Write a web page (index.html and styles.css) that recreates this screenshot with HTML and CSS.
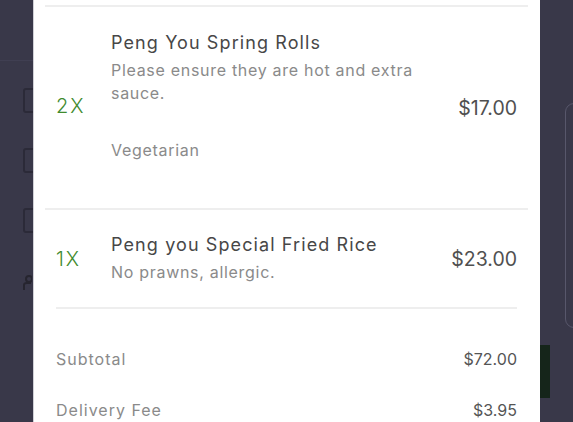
FILE: index.html
```html
<!DOCTYPE html>
<html lang="en">
<head>
    <meta charset="UTF-8">
    <meta name="viewport" content="width=device-width, initial-scale=1.0">
    <title>Order</title>
    <link rel="stylesheet" href="styles.css">
</head>
<body>
    <div class="screen">
        <div class="side side-left">
            <div class="rule"></div>
            <div class="field"></div>
            <div class="field"></div>
            <div class="field"></div>
            <svg class="person" width="10" height="16" viewBox="0 0 10 16">
                <circle cx="7" cy="4" r="3" fill="none" stroke="#26252f" stroke-width="2"/>
                <path d="M2 15 L2 10 Q2 8 5 8 L9 8" fill="none" stroke="#26252f" stroke-width="2"/>
            </svg>
        </div>

        <div class="modal">
            <div class="divider"></div>

            <div class="item item-first">
                <div class="qty">2X</div>
                <div class="info">
                    <div class="title">Peng You Spring Rolls</div>
                    <div class="note">Please ensure they are hot and extra sauce.</div>
                    <div class="note option">Vegetarian</div>
                </div>
                <div class="price">$17.00</div>
            </div>

            <div class="divider"></div>

            <div class="item item-second">
                <div class="qty">1X</div>
                <div class="info">
                    <div class="title">Peng you Special Fried Rice</div>
                    <div class="note">No prawns, allergic.</div>
                </div>
                <div class="price">$23.00</div>
            </div>

            <div class="summary">
                <div class="divider"></div>
                <div class="line line-first">
                    <span>Subtotal</span>
                    <span class="amount">$72.00</span>
                </div>
                <div class="line">
                    <span>Delivery Fee</span>
                    <span class="amount">$3.95</span>
                </div>
            </div>
        </div>

        <div class="side side-right">
            <div class="card"></div>
            <div class="go"></div>
        </div>
    </div>
</body>
</html>
```

FILE: styles.css
```css
*
{
    margin: 0;
    padding: 0;
    box-sizing: border-box;
}
body
{
    background-color: #393849;
    font-family: Inter, "Noto Sans", sans-serif;
    overflow: hidden;
}
.screen
{
    display: flex;
    height: 100vh;
}
.side
{
    width: 33px;
    flex-shrink: 0;
    overflow: hidden;
    display: flex;
    flex-direction: column;
}
.side-left
{
    padding-top: 60px;
}
.rule
{
    height: 1px;
    background-color: #403f52;
    margin-bottom: 27px;
}
.field
{
    margin-left: 23px;
    width: 24px;
    height: 25px;
    border: 2px solid #2b2a38;
    border-radius: 3px;
    margin-bottom: 35px;
}
.person
{
    margin-left: 22px;
    margin-top: 7px;
}
.modal
{
    width: 507px;
    flex-shrink: 0;
    background-color: #fff;
    border-left: 1px solid #d0d0d6;
    padding: 5px 12px 0 11px;
}
.divider
{
    height: 2px;
    background-color: #eeeeee;
}
.item
{
    display: flex;
    align-items: center;
    padding: 0 11px 0 11px;
}
.item-first
{
    padding-top: 24px;
    padding-bottom: 24px;
}
.item-first .info
{
    padding-bottom: 22px;
}
.item-second
{
    padding-top: 23px;
    padding-bottom: 23px;
}
.qty
{
    width: 55px;
    flex-shrink: 0;
    color: #3f8b2e;
    font-size: 20px;
    font-weight: 300;
    letter-spacing: 2px;
}
.item-first .qty
{
    margin-top: -4px;
}
.info
{
    flex: 1;
    padding-right: 20px;
}
.title
{
    color: #474747;
    font-size: 18px;
    line-height: 24px;
    letter-spacing: 1.1px;
}
.note
{
    color: #8a8a8a;
    font-size: 16px;
    line-height: 23px;
    letter-spacing: 0.7px;
    margin-top: 4px;
}
.option
{
    margin-top: 34px;
}
.price
{
    color: #505050;
    font-size: 19.5px;
}
.summary
{
    padding: 0 11px;
}
.line
{
    display: flex;
    justify-content: space-between;
    align-items: center;
    height: 51px;
    color: #8a8a8a;
    font-size: 16px;
    letter-spacing: 1px;
}
.line-first
{
    margin-top: 24px;
}
.amount
{
    color: #555;
    letter-spacing: 0;
}
.side-right
{
    padding-top: 103px;
}
.card
{
    margin-left: 25px;
    width: 40px;
    height: 225px;
    border: 1px solid #58576b;
    border-radius: 9px;
}
.go
{
    margin-top: 17px;
    width: 10px;
    height: 53px;
    background-color: #15251a;
}
```
